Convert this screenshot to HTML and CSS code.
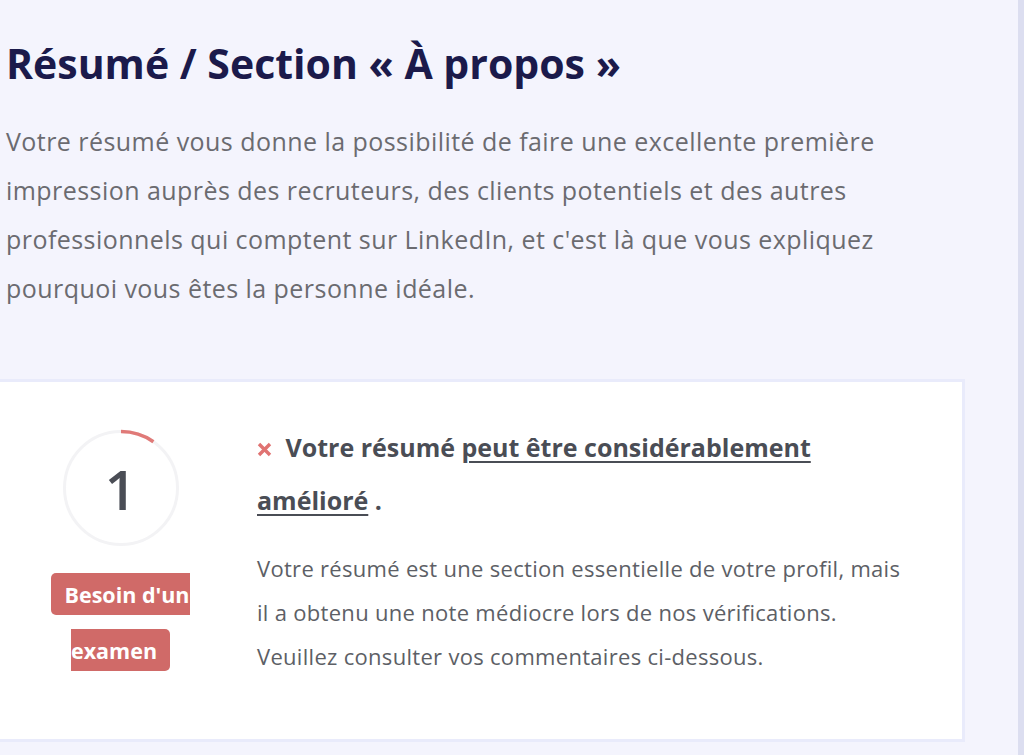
FILE: index.html
```html
<!DOCTYPE html>
<html lang="fr">
<head>
<meta charset="utf-8">
<title>Résumé</title>
<link rel="stylesheet" href="styles.css">
</head>
<body>
<div class="page">
  <main class="content">
    <h1 class="title">Résumé / Section « À propos »</h1>
    <p class="intro">Votre résumé vous donne la possibilité de faire une excellente première impression auprès des recruteurs, des clients potentiels et des autres professionnels qui comptent sur LinkedIn, et c'est là que vous expliquez pourquoi vous êtes la personne idéale.</p>
    <section class="card">
      <div class="score">
        <div class="ring">
          <svg class="ring-svg" width="118" height="118" viewBox="0 0 118 118">
            <circle cx="59" cy="59" r="56.5" fill="none" stroke="#f3f3f5" stroke-width="3"/>
            <path d="M59 2.5 A56.5 56.5 0 0 1 91.4 12.7" fill="none" stroke="#e07a78" stroke-width="3.5"/>
          </svg>
          <span class="ring-num">1</span>
        </div>
        <div class="badge-wrap"><span class="badge">Besoin d'un examen</span></div>
      </div>
      <div class="detail">
        <h2 class="verdict"><svg class="x-icon" width="15" height="15" viewBox="0 0 15 15"><path d="M2 2 L13 13 M13 2 L2 13" stroke="#e07372" stroke-width="3.4" stroke-linecap="butt"/></svg> Votre résumé <u>peut être considérablement amélioré</u> .</h2>
        <p class="desc">Votre résumé est une section essentielle de votre profil, mais il a obtenu une note médiocre lors de nos vérifications. Veuillez consulter vos commentaires ci-dessous.</p>
      </div>
    </section>
  </main>
  <div class="scrollbar"></div>
</div>
</body>
</html>
```
FILE: styles.css
```css
html, body {
  margin: 0;
  padding: 0;
  background: #f4f4fd;
  height: 100%;
  overflow: hidden;
}
body {
  font-family: "Open Sans", "Lato", sans-serif;
}
.page {
  display: flex;
  height: 755px;
}
.content {
  flex: 1;
  padding: 0 0 0 6px;
  min-width: 0;
}
.scrollbar {
  width: 6px;
  background: #dcdef0;
}
.title {
  margin: 33px 0 0 0;
  font-size: 41px;
  line-height: 60px;
  font-weight: 700;
  color: #1b1a4b;
}
.intro {
  margin: 24px 0 0 0;
  max-width: 890px;
  font-size: 25px;
  letter-spacing: 0.45px;
  line-height: 49px;
  color: #6b6b70;
}
.card {
  margin: 66px 0 0 -16px;
  width: 975px;
  height: 363px;
  box-sizing: border-box;
  background: #fff;
  border: 3px solid #e9ebfb;
  display: flex;
  padding: 47px 0 0 0;
}
.score {
  width: 141px;
  margin-left: 57px;
  display: flex;
  flex-direction: column;
  align-items: center;
}
.ring {
  position: relative;
  width: 118px;
  height: 118px;
}
.ring-svg {
  display: block;
}
.ring-num {
  position: absolute;
  inset: 0;
  display: flex;
  align-items: center;
  justify-content: center;
  font-size: 55px;
  color: #4a4d55;
  font-weight: 600;
}
.badge-wrap {
  margin-top: 20px;
  width: 141px;
  text-align: center;
  line-height: 54px;
}
.badge {
  background: #d06a68;
  color: #fff;
  font-weight: 700;
  font-size: 21.5px;
  padding: 6.5px 13px;
  border-radius: 5px;
}
.detail {
  margin-left: 66px;
  width: 650px;
}
.verdict {
  margin: -8px 0 0 0;
  font-size: 25px;
  letter-spacing: 0;
  line-height: 53px;
  font-weight: 700;
  color: #4a4d55;
}
.x-icon {
  margin-right: 7px;
}
.verdict u {
  text-decoration-thickness: 2px;
  text-underline-offset: 4px;
}
.desc {
  margin: 19px 0 0 0;
  font-size: 22px;
  letter-spacing: 0.3px;
  line-height: 44px;
  color: #5d5f66;
}
```
